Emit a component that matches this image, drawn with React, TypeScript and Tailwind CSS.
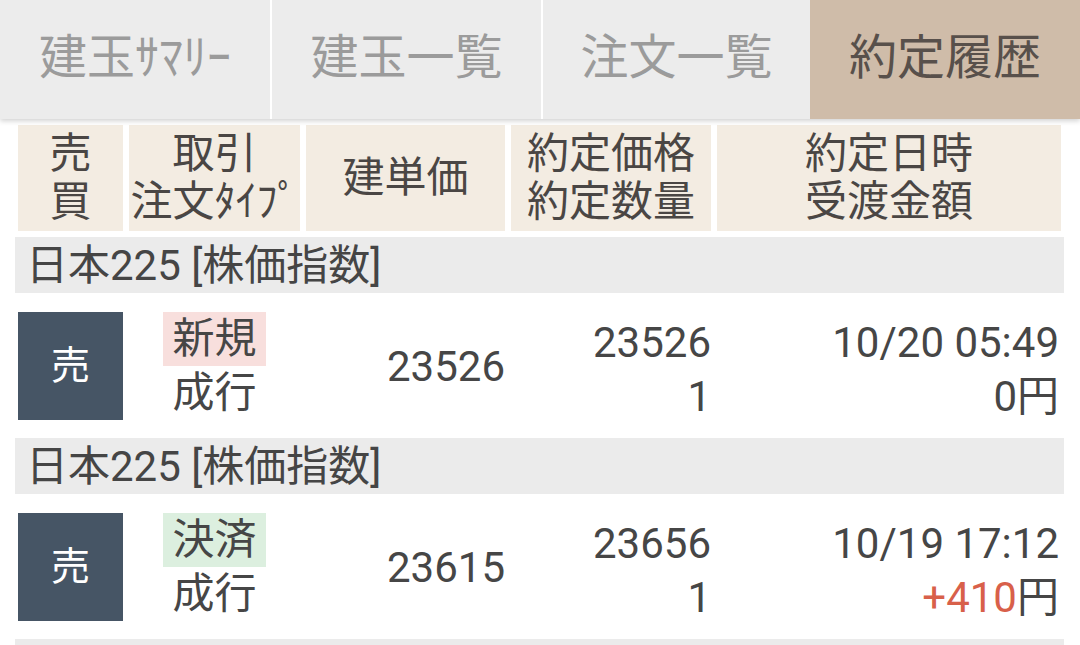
const FONT = "font-['Roboto','Noto_Sans_CJK_JP',sans-serif]";
const COLS = 'grid grid-cols-[105px_171px_199px_200px_344px] gap-[6px] ml-[3px]';

type Trade = {
  side: string;
  kind: string;
  kindBg: string;
  order: string;
  entry: string;
  price: string;
  qty: string;
  date: string;
  pnl: string;
  pnlColor?: string;
};

const trades: Trade[] = [
  {
    side: '売',
    kind: '新規',
    kindBg: 'bg-[#f8dfdd]',
    order: '成行',
    entry: '23526',
    price: '23526',
    qty: '1',
    date: '10/20 05:49',
    pnl: '0',
  },
  {
    side: '売',
    kind: '決済',
    kindBg: 'bg-[#dcefdf]',
    order: '成行',
    entry: '23615',
    price: '23656',
    qty: '1',
    date: '10/19 17:12',
    pnl: '+410',
    pnlColor: 'text-[#d8604a]',
  },
];

function Tabs() {
  const tabs = [
    { label: '建玉ｻﾏﾘｰ', w: 'w-[270px]' },
    { label: '建玉一覧', w: 'w-[269px]' },
    { label: '注文一覧', w: 'w-[267px]' },
  ];
  return (
    <div className="flex h-[119px] bg-white shadow-[0_2px_5px_rgba(0,0,0,0.18)] relative z-10">
      {tabs.map((t, i) => (
        <div
          key={t.label}
          className={`${t.w} ${i < 2 ? 'mr-[2px]' : ''} flex items-center justify-center bg-[#ececec] text-[48px] text-[#9b9b9b] pb-[3px]`}
        >
          {t.label}
        </div>
      ))}
      <div className="flex-1 flex items-center justify-center bg-[#cfbca9] text-[48px] text-[#58504b] pb-[3px]">
        約定履歴
      </div>
    </div>
  );
}

function HeaderRow() {
  const cell = 'bg-[#f3ece2] flex flex-col items-center justify-center text-[42px] leading-[48px] text-[#4a4644]';
  return (
    <div className={`${COLS} h-[106px]`}>
      <div className={cell}>
        <span>売</span>
        <span>買</span>
      </div>
      <div className={cell}>
        <span>取引</span>
        <span>注文ﾀｲﾌﾟ</span>
      </div>
      <div className={cell}>
        <span>建単価</span>
      </div>
      <div className={cell}>
        <span>約定価格</span>
        <span>約定数量</span>
      </div>
      <div className={cell}>
        <span>約定日時</span>
        <span>受渡金額</span>
      </div>
    </div>
  );
}

function SymbolBar({ label }: { label?: string }) {
  return (
    <div className="h-[56px] bg-[#ebebeb] flex items-center pl-[11px] text-[42px] text-[#454545] w-[1049px]">
      {label}
    </div>
  );
}

function TradeRow({ t }: { t: Trade }) {
  return (
    <div className={`${COLS} pt-[19px] pb-[18px] text-[42px] leading-[54px] text-[#464646]`}>
      <div className="h-[108px] bg-[#465565] flex items-center justify-center text-white text-[39px]">
        {t.side}
      </div>
      <div className="h-[108px] flex flex-col items-center">
        <span className={`${t.kindBg} px-[9px]`}>{t.kind}</span>
        <span>{t.order}</span>
      </div>
      <div className="h-[108px] flex items-center justify-end pt-[2px]">{t.entry}</div>
      <div className="h-[108px] flex flex-col items-end pt-[4px]">
        <span>{t.price}</span>
        <span>{t.qty}</span>
      </div>
      <div className="h-[108px] flex flex-col items-end pt-[4px] pr-[2px]">
        <span>{t.date}</span>
        <span>
          <span className={t.pnlColor ?? ''}>{t.pnl}</span>円
        </span>
      </div>
    </div>
  );
}

export default function App() {
  return (
    <div className={`${FONT} w-[1080px] h-[645px] bg-white overflow-hidden`}>
      <Tabs />
      <div className="pl-[15px] pt-[6px] flex flex-col">
        <HeaderRow />
        <div className="h-[6px]" />
        {trades.map((t, i) => (
          <div key={i}>
            <SymbolBar label="日本225 [株価指数]" />
            <TradeRow t={t} />
          </div>
        ))}
        <SymbolBar />
      </div>
    </div>
  );
}
